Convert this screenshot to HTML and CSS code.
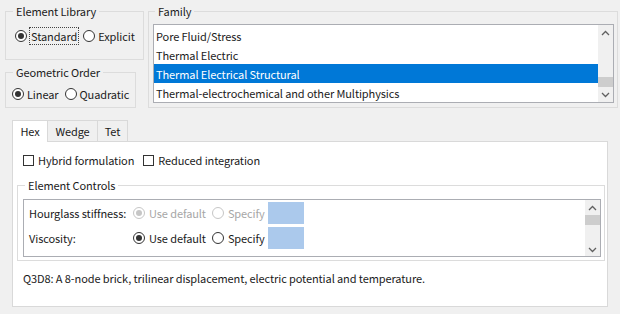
FILE: index.html
```html
<!DOCTYPE html>
<html>
<head>
<meta charset="utf-8">
<link rel="stylesheet" href="styles.css">
</head>
<body>
<div class="top">
  <div class="left-col">
    <fieldset class="group lib">
      <legend>Element Library</legend>
      <div class="opts">
        <span class="opt"><span class="radio on"></span><span class="focus">Standard</span></span>
        <span class="opt"><span class="radio"></span>Explicit</span>
      </div>
    </fieldset>
    <fieldset class="group order">
      <legend>Geometric Order</legend>
      <div class="opts">
        <span class="opt"><span class="radio on"></span>Linear</span>
        <span class="opt"><span class="radio"></span>Quadratic</span>
      </div>
    </fieldset>
  </div>
  <fieldset class="group family">
    <legend>Family</legend>
    <div class="listbox">
      <div class="rows">
        <div class="row">Pore Fluid/Stress</div>
        <div class="row">Thermal Electric</div>
        <div class="row sel">Thermal Electrical Structural</div>
        <div class="row">Thermal-electrochemical and other Multiphysics</div>
      </div>
      <div class="vscroll">
        <svg class="arrow" width="9" height="6" viewBox="0 0 9 6"><path d="M1 5 L4.5 1.5 L8 5" fill="none" stroke="#606060" stroke-width="1.3"/></svg>
        <div class="track"><div class="thumb t1"></div></div>
        <svg class="arrow" width="9" height="6" viewBox="0 0 9 6"><path d="M1 1 L4.5 4.5 L8 1" fill="none" stroke="#606060" stroke-width="1.3"/></svg>
      </div>
    </div>
  </fieldset>
</div>

<div class="tabs">
  <div class="tab active">Hex</div>
  <div class="tab">Wedge</div>
  <div class="tab">Tet</div>
</div>
<div class="panel">
  <div class="checks">
    <span class="opt"><span class="check"></span>Hybrid formulation</span>
    <span class="opt"><span class="check"></span>Reduced integration</span>
  </div>
  <fieldset class="group controls">
    <legend>Element Controls</legend>
    <div class="frame">
      <div class="ctl-rows">
        <div class="ctl-row disabled">
          <span class="label">Hourglass stiffness:</span>
          <span class="opt o1"><span class="radio on"></span>Use default</span>
          <span class="opt o2"><span class="radio"></span>Specify</span>
          <span class="field"></span>
        </div>
        <div class="ctl-row">
          <span class="label">Viscosity:</span>
          <span class="opt o1"><span class="radio on"></span>Use default</span>
          <span class="opt o2"><span class="radio"></span>Specify</span>
          <span class="field"></span>
        </div>
      </div>
      <div class="vscroll small">
        <svg class="arrow" width="9" height="6" viewBox="0 0 9 6"><path d="M1 5 L4.5 1.5 L8 5" fill="none" stroke="#606060" stroke-width="1.3"/></svg>
        <div class="track"><div class="thumb t2"></div></div>
        <svg class="arrow" width="9" height="6" viewBox="0 0 9 6"><path d="M1 1 L4.5 4.5 L8 1" fill="none" stroke="#606060" stroke-width="1.3"/></svg>
      </div>
    </div>
  </fieldset>
  <div class="desc">Q3D8: A 8-node brick, trilinear displacement, electric potential and temperature.</div>
</div>
</body>
</html>
```

FILE: styles.css
```css
* { box-sizing: border-box; }
html, body { margin: 0; padding: 0; }
body {
  width: 620px;
  height: 314px;
  overflow: hidden;
  background: #f0f0f0;
  font-family: "Noto Sans CJK SC", "Noto Sans", sans-serif;
  font-size: 11px;
  letter-spacing: -0.1px;
  line-height: 16px;
  color: #1b1b1b;
}

.top {
  display: flex;
  align-items: flex-start;
  padding: 3px 0 0 5px;
  gap: 4px;
}
.left-col {
  display: flex;
  flex-direction: column;
}

.group {
  margin: 0;
  border: 1px solid #dcdcdc;
  min-width: 0;
}
.group legend {
  padding: 0 3px;
  line-height: 16px;
}

.lib {
  width: 139px;
  padding: 9px 0 15px 9px;
}
.lib legend { margin-left: -2px; }
.order {
  width: 131px;
  margin-top: 4px;
  padding: 6px 0 5px 6px;
}
.order legend { margin-left: 1px; }
.opts {
  display: flex;
  gap: 6px;
}
.lib .opts { gap: 5px; }
.opt {
  display: inline-flex;
  align-items: center;
  white-space: nowrap;
  height: 16px;
}
.radio {
  width: 12px;
  height: 12px;
  border: 1px solid #333;
  border-radius: 50%;
  background: #fff;
  margin-right: 3px;
  display: inline-flex;
  align-items: center;
  justify-content: center;
  flex: none;
}
.radio.on::after {
  content: "";
  width: 6px;
  height: 6px;
  border-radius: 50%;
  background: #333;
}
.focus {
  outline: 1px dotted #444;
  outline-offset: 0;
  padding: 0 1px;
}
.check {
  width: 11px;
  height: 11px;
  border: 1px solid #333;
  background: #fff;
  margin-right: 4px;
  flex: none;
}

.family {
  width: 470px;
  padding: 5px 3px 4px 4px;
}
.family legend { margin-left: 2px; }
.listbox {
  display: flex;
  height: 79px;
  border: 1px solid #abadb3;
  background: #fff;
}
.rows {
  flex: 1;
  padding-top: 1px;
  overflow: hidden;
}
.row {
  height: 19px;
  line-height: 20px;
  padding-left: 2px;
  white-space: nowrap;
}
.row.sel {
  background: #0078d7;
  color: #fff;
}
.vscroll {
  width: 15px;
  background: #f0f0f0;
  display: flex;
  flex-direction: column;
  align-items: center;
  padding: 5px 0 4px;
}
.vscroll .arrow { flex: none; }
.track {
  flex: 1;
  width: 15px;
}
.thumb {
  background: #cdcdcd;
  width: 15px;
}
.t1 { margin-top: 41px; height: 10px; }
.t2 { margin-top: 4px; height: 10px; }

.tabs {
  display: flex;
  margin: 12px 0 0 12px;
  height: 21px;
}
.tab {
  border: 1px solid #d9d9d9;
  border-bottom: none;
  background: #f0f0f0;
  line-height: 20px;
  margin-left: -1px;
  text-align: center;
}
.tab:first-child { margin-left: 0; }
.tab.active {
  background: #fff;
  position: relative;
  z-index: 1;
  height: 22px;
}
.tabs .tab:nth-child(1) { width: 36px; }
.tabs .tab:nth-child(2) { width: 51px; }
.tabs .tab:nth-child(3) { width: 31px; }

.panel {
  margin-left: 12px;
  width: 596px;
  height: 166px;
  background: #fff;
  border: 1px solid #d9d9d9;
  padding: 10px 2px 0 4px;
}
.checks {
  display: flex;
  gap: 9px;
  padding-left: 6px;
}

.controls {
  margin-top: 9px;
  padding: 6px 3px 3px 5px;
}
.controls legend { margin-left: 2px; }
.frame {
  display: flex;
  height: 58px;
  border: 1px solid #abadb3;
}
.ctl-rows {
  flex: 1;
  padding: 2px 0 0 5px;
  display: flex;
  flex-direction: column;
  gap: 3px;
}
.ctl-row {
  display: flex;
  align-items: center;
  height: 22px;
}
.ctl-row .label { width: 104px; white-space: nowrap; }
.ctl-row .radio { margin-right: 4px; }
.ctl-row .o1 { margin-right: 6px; }
.ctl-row .o2 { margin-right: 3px; }
.field {
  width: 36px;
  height: 22px;
  background: #abc9ec;
}
.disabled .opt { color: #a6a6a6; }
.disabled .radio { border-color: #c6c6c6; }
.disabled .radio.on::after { background: #c6c6c6; }
.vscroll.small { padding: 5px 0 3px; }

.desc {
  margin-top: 9px;
  padding-left: 6px;
  white-space: nowrap;
}
```
